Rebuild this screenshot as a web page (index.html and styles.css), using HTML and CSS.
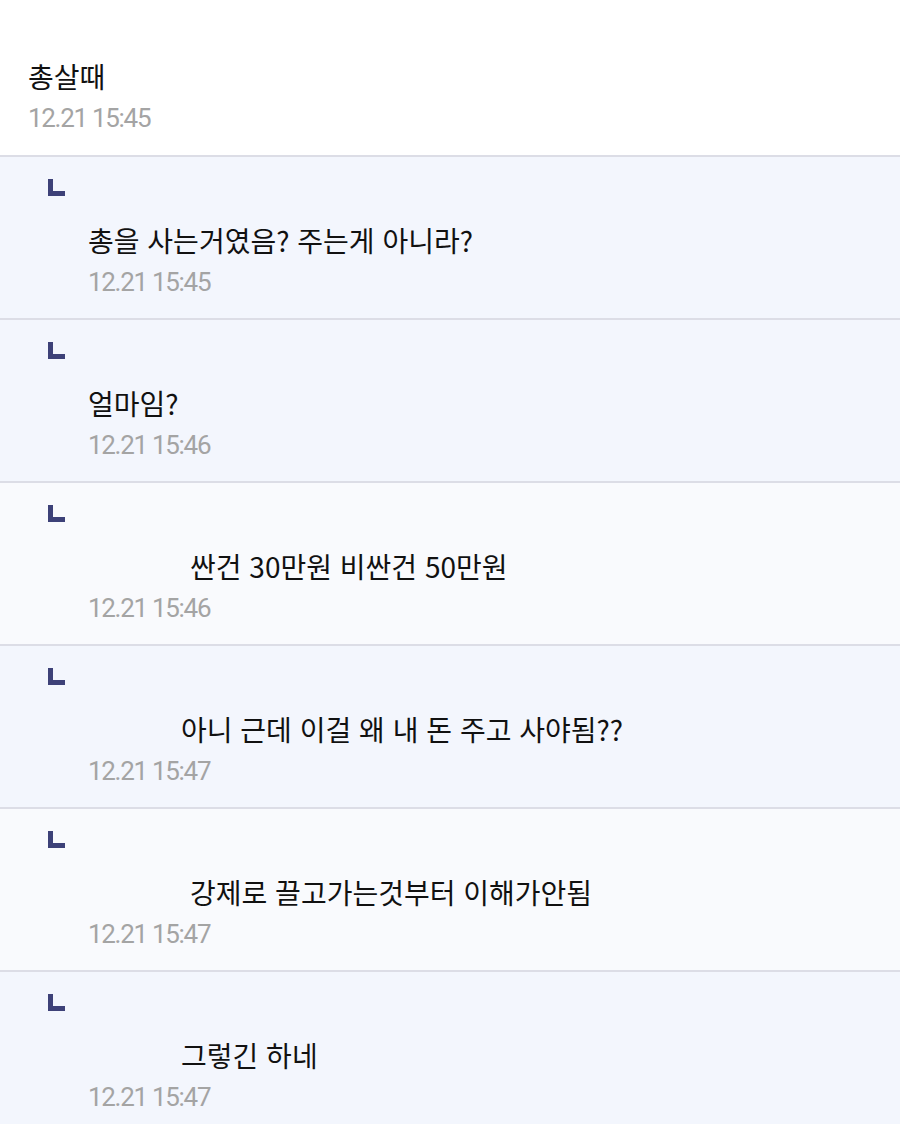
FILE: index.html
```html
<!DOCTYPE html>
<html lang="ko">
<head>
<meta charset="utf-8">
<link rel="stylesheet" href="styles.css">
</head>
<body>
<div class="page">
  <div class="post">
    <div class="text">총살때</div>
    <div class="time">12.21 15:45</div>
  </div>
  <div class="reply">
    <svg class="icon" width="18" height="17" viewBox="0 0 18 17"><path d="M0 0H5V12H17V17H0Z" fill="#3d4178"/></svg>
    <div class="body">
      <div class="text">총을 사는거였음? 주는게 아니라?</div>
      <div class="time">12.21 15:45</div>
    </div>
  </div>
  <div class="reply">
    <svg class="icon" width="18" height="17" viewBox="0 0 18 17"><path d="M0 0H5V12H17V17H0Z" fill="#3d4178"/></svg>
    <div class="body">
      <div class="text">얼마임?</div>
      <div class="time">12.21 15:46</div>
    </div>
  </div>
  <div class="reply light">
    <svg class="icon" width="18" height="17" viewBox="0 0 18 17"><path d="M0 0H5V12H17V17H0Z" fill="#3d4178"/></svg>
    <div class="body">
      <div class="text indent-a">싼건 30만원 비싼건 50만원</div>
      <div class="time">12.21 15:46</div>
    </div>
  </div>
  <div class="reply">
    <svg class="icon" width="18" height="17" viewBox="0 0 18 17"><path d="M0 0H5V12H17V17H0Z" fill="#3d4178"/></svg>
    <div class="body">
      <div class="text indent-b">아니 근데 이걸 왜 내 돈 주고 사야됨??</div>
      <div class="time">12.21 15:47</div>
    </div>
  </div>
  <div class="reply light">
    <svg class="icon" width="18" height="17" viewBox="0 0 18 17"><path d="M0 0H5V12H17V17H0Z" fill="#3d4178"/></svg>
    <div class="body">
      <div class="text indent-a">강제로 끌고가는것부터 이해가안됨</div>
      <div class="time">12.21 15:47</div>
    </div>
  </div>
  <div class="reply">
    <svg class="icon" width="18" height="17" viewBox="0 0 18 17"><path d="M0 0H5V12H17V17H0Z" fill="#3d4178"/></svg>
    <div class="body">
      <div class="text indent-b">그렇긴 하네</div>
      <div class="time">12.21 15:47</div>
    </div>
  </div>
</div>
</body>
</html>
```

FILE: styles.css
```css
html, body {
  margin: 0;
  padding: 0;
  background: #ffffff;
}
.page {
  width: 900px;
  font-family: "Noto Sans CJK KR", "Noto Sans", sans-serif;
  color: #111111;
}
.post {
  height: 155px;
  box-sizing: border-box;
  padding: 58px 0 0 28px;
  background: #ffffff;
}
.text {
  font-size: 28px;
  line-height: 36px;
  height: 36px;
  white-space: nowrap;
}
.time {
  font-family: "Roboto", "Noto Sans", sans-serif;
  font-weight: 400;
  font-size: 26px;
  line-height: 30px;
  margin-top: 9px;
  color: #a4a4a4;
  letter-spacing: -1.3px;
}
.reply {
  height: 163px;
  box-sizing: border-box;
  border-top: 2px solid #dcdde6;
  background: #f3f6fd;
  display: flex;
  flex-direction: column;
  padding: 22px 0 0 48px;
}
.reply.light {
  background: #f9fafd;
}
.icon {
  display: block;
}
.reply .body {
  margin-top: 26px;
  padding-left: 40px;
}
.indent-a {
  padding-left: 102px;
}
.indent-b {
  padding-left: 93px;
}
```
